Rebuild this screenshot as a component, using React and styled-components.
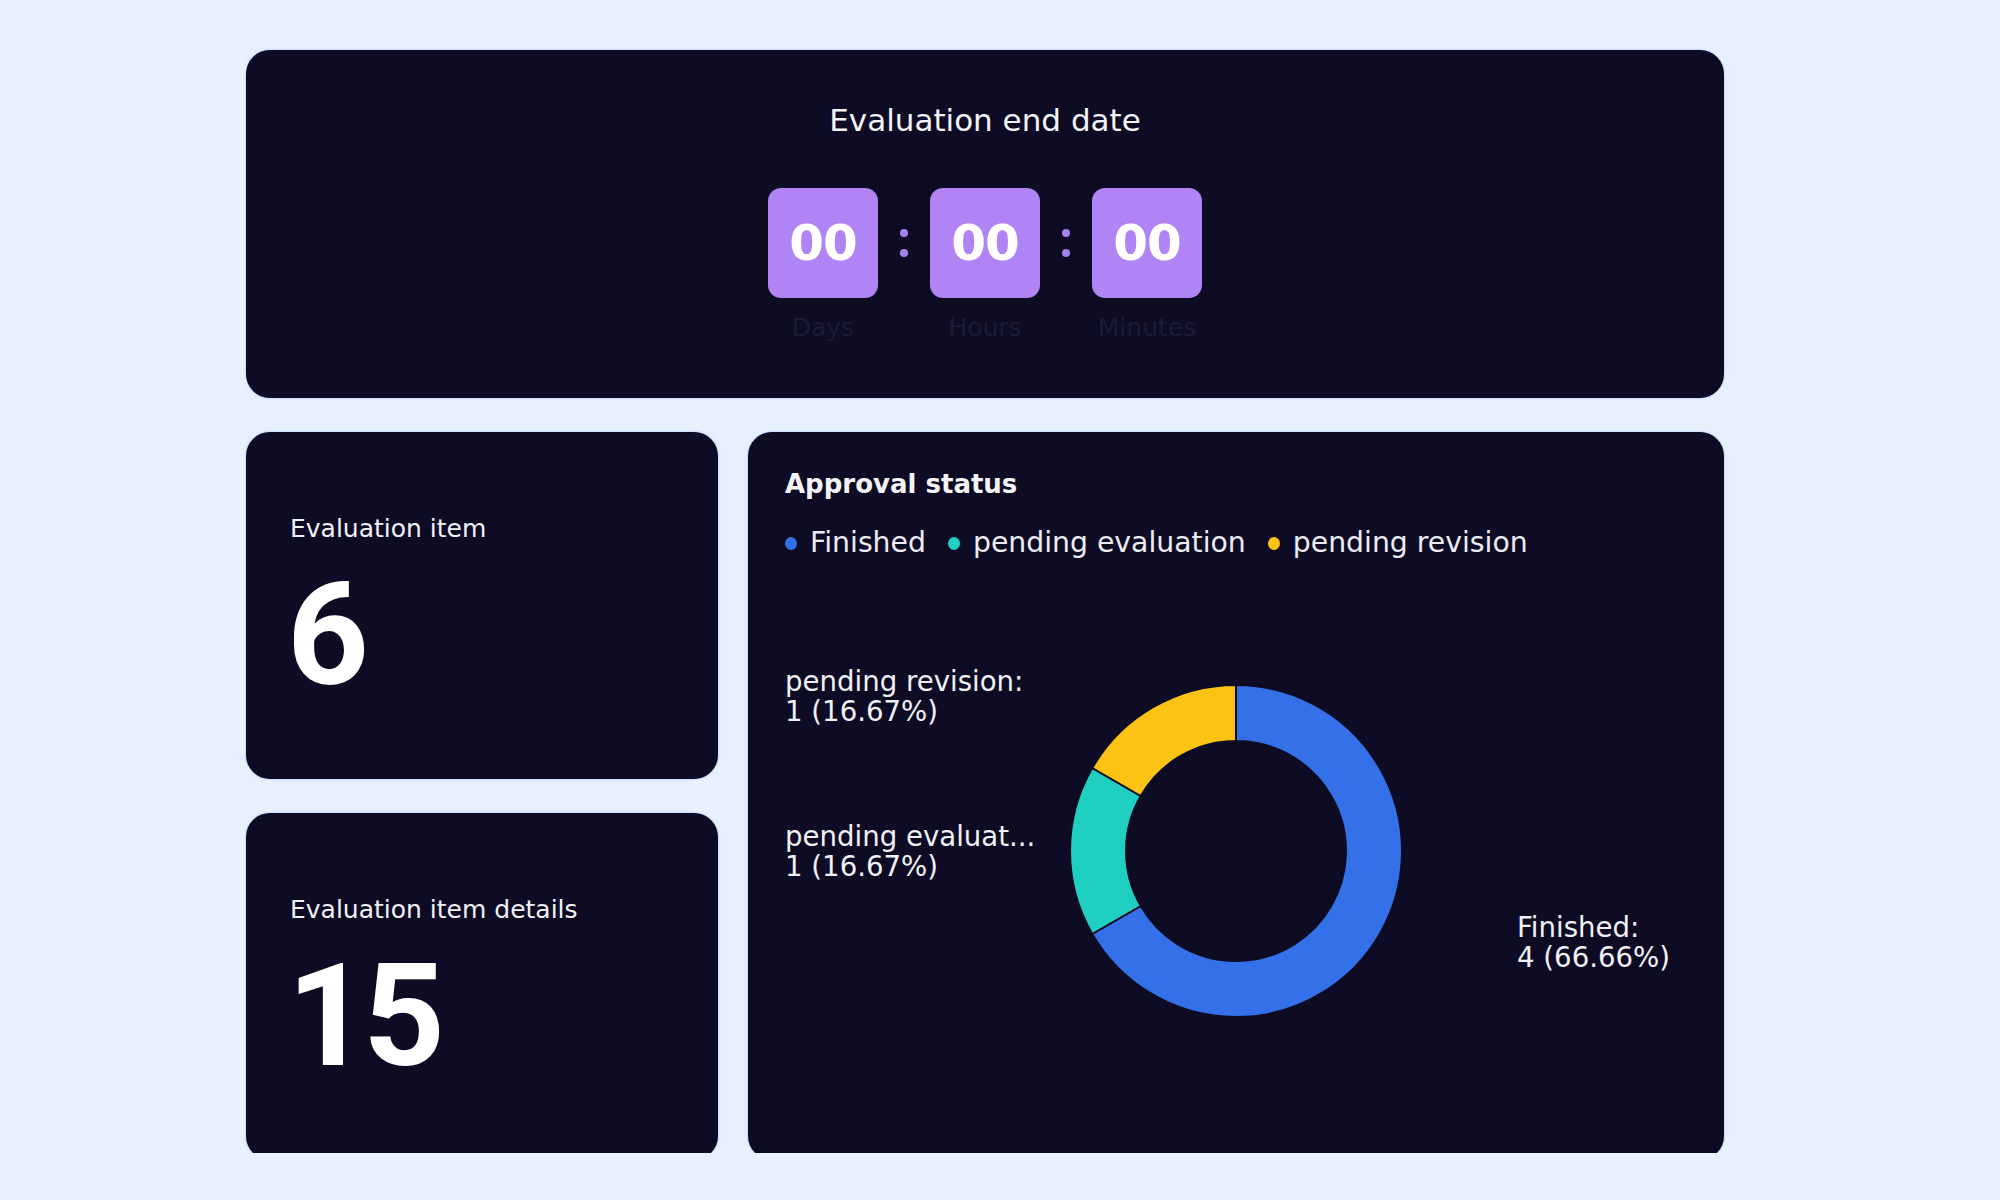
import React from "react";
import styled, { createGlobalStyle } from "styled-components";

const GlobalStyle = createGlobalStyle`
  html, body {
    margin: 0;
    padding: 0;
    background: #e8f0fe;
  }
  * { box-sizing: border-box; }
`;

const Page = styled.div`
  height: 1153px;
  overflow: hidden;
  padding: 50px 0 0 246px;
  font-family: "DejaVu Sans", "Liberation Sans", sans-serif;
  color: #f1f1f6;
`;

const Grid = styled.div`
  width: 1478px;
  display: grid;
  grid-template-columns: 472px 1fr;
  grid-template-rows: 348px 347px 347px;
  column-gap: 30px;
  row-gap: 34px;
`;

const Card = styled.section`
  background: #0d0c24;
  border-radius: 24px;
  box-shadow: 0 0 2px 0 rgba(60, 120, 255, 0.55);
  grid-column: ${(p) => p.$col || "auto"};
  grid-row: ${(p) => p.$row || "auto"};
`;

const CountdownCard = styled(Card)`
  display: flex;
  flex-direction: column;
  align-items: center;
  padding-top: 52px;
`;

const CountdownTitle = styled.h2`
  margin: 0;
  font-size: 31px;
  line-height: 36px;
  font-weight: 400;
  color: #f3f3f8;
`;

const Timer = styled.div`
  display: flex;
  margin-top: 50px;
  align-items: flex-start;
`;

const Unit = styled.div`
  display: flex;
  flex-direction: column;
  align-items: center;
  width: 110px;
`;

const DigitBox = styled.div`
  width: 110px;
  height: 110px;
  border-radius: 13px;
  background: #b084f4;
  display: flex;
  align-items: center;
  justify-content: center;
  font-family: "DejaVu Sans", sans-serif;
  font-weight: 700;
  font-size: 50px;
  color: #ffffff;
  letter-spacing: -1px;
`;

const UnitLabel = styled.div`
  margin-top: 15px;
  font-size: 25px;
  line-height: 30px;
  color: #1c1a36;
  white-space: nowrap;
`;

const Colon = styled.div`
  width: 52px;
  height: 110px;
  display: flex;
  flex-direction: column;
  align-items: center;
  justify-content: center;
  gap: 12px;
`;

const ColonDot = styled.span`
  width: 8px;
  height: 8px;
  border-radius: 50%;
  background: #a584ee;
`;

const StatCard = styled(Card)`
  padding: 82px 0 0 44px;
`;

const StatLabel = styled.div`
  font-size: 25px;
  line-height: 30px;
  color: #f1f1f6;
`;

const StatValue = styled.div`
  margin-top: 20px;
  margin-left: -3px;
  font-family: Roboto, "Liberation Sans", sans-serif;
  font-weight: 700;
  font-size: 143px;
  line-height: 143px;
  letter-spacing: -6px;
  color: #ffffff;
`;

const ChartCard = styled(Card)`
  padding: 37px 37px 0 37px;
`;

const ChartTitle = styled.h3`
  margin: 0;
  font-size: 26px;
  line-height: 30px;
  font-weight: 700;
  color: #f4f4f8;
`;

const Legend = styled.ul`
  list-style: none;
  margin: 28px 0 0;
  padding: 0;
  display: flex;
  gap: 22px;
`;

const LegendItem = styled.li`
  display: flex;
  align-items: center;
  gap: 13px;
  font-size: 28.3px;
  line-height: 32px;
  color: #ececf2;
`;

const LegendDot = styled.span`
  width: 12px;
  height: 13px;
  border-radius: 50%;
  background: ${(p) => p.$color};
`;

const ChartArea = styled.div`
  position: relative;
  height: 582px;
  padding-top: 2px;
  display: flex;
  align-items: center;
  justify-content: center;
`;

const DonutSvg = styled.svg`
  display: block;
  width: 340px;
  height: 340px;
`;

const SliceLabel = styled.div`
  position: absolute;
  left: ${(p) => p.$x}px;
  top: ${(p) => p.$y}px;
  font-size: 27.6px;
  line-height: 30px;
  color: #f0f0f5;
  white-space: nowrap;
`;

const COLORS = {
  finished: "#3471e8",
  evaluation: "#1fcfbf",
  revision: "#fcc315",
};

const slices = [
  { key: "finished", from: 0, to: 240 },
  { key: "evaluation", from: 240, to: 300 },
  { key: "revision", from: 300, to: 360 },
];

function arcPath(cx, cy, r0, r1, a0, a1) {
  const pt = (r, a) => {
    const rad = (a * Math.PI) / 180;
    return [cx + r * Math.sin(rad), cy - r * Math.cos(rad)];
  };
  const large = a1 - a0 > 180 ? 1 : 0;
  const [x1, y1] = pt(r1, a0);
  const [x2, y2] = pt(r1, a1 - 0.0001);
  const [x3, y3] = pt(r0, a1 - 0.0001);
  const [x4, y4] = pt(r0, a0);
  return `M${x1} ${y1} A${r1} ${r1} 0 ${large} 1 ${x2} ${y2} L${x3} ${y3} A${r0} ${r0} 0 ${large} 0 ${x4} ${y4} Z`;
}

function Donut() {
  return (
    <DonutSvg viewBox="0 0 340 340">
      {slices.map((s) => (
        <path
          key={s.key}
          d={arcPath(170, 170, 110, 166, s.from, s.to)}
          fill={COLORS[s.key]}
          stroke="#0d0c24"
          strokeWidth="2"
          strokeLinejoin="round"
        />
      ))}
    </DonutSvg>
  );
}

export default function App() {
  return (
    <>
      <GlobalStyle />
      <Page>
        <Grid>
          <CountdownCard $col="1 / 3" $row="1">
            <CountdownTitle>Evaluation end date</CountdownTitle>
            <Timer>
              <Unit>
                <DigitBox>00</DigitBox>
                <UnitLabel>Days</UnitLabel>
              </Unit>
              <Colon>
                <ColonDot />
                <ColonDot />
              </Colon>
              <Unit>
                <DigitBox>00</DigitBox>
                <UnitLabel>Hours</UnitLabel>
              </Unit>
              <Colon>
                <ColonDot />
                <ColonDot />
              </Colon>
              <Unit>
                <DigitBox>00</DigitBox>
                <UnitLabel>Minutes</UnitLabel>
              </Unit>
            </Timer>
          </CountdownCard>

          <StatCard $col="1" $row="2">
            <StatLabel>Evaluation item</StatLabel>
            <StatValue>6</StatValue>
          </StatCard>

          <StatCard $col="1" $row="3">
            <StatLabel>Evaluation item details</StatLabel>
            <StatValue>15</StatValue>
          </StatCard>

          <ChartCard $col="2" $row="2 / 4">
            <ChartTitle>Approval status</ChartTitle>
            <Legend>
              <LegendItem>
                <LegendDot $color={COLORS.finished} />
                Finished
              </LegendItem>
              <LegendItem>
                <LegendDot $color={COLORS.evaluation} />
                pending evaluation
              </LegendItem>
              <LegendItem>
                <LegendDot $color={COLORS.revision} />
                pending revision
              </LegendItem>
            </Legend>
            <ChartArea>
              <Donut />
              <SliceLabel $x={0} $y={108}>
                pending revision:
                <br />1 (16.67%)
              </SliceLabel>
              <SliceLabel $x={0} $y={263}>
                pending evaluat...
                <br />1 (16.67%)
              </SliceLabel>
              <SliceLabel $x={732} $y={354}>
                Finished:
                <br />4 (66.66%)
              </SliceLabel>
            </ChartArea>
          </ChartCard>
        </Grid>
      </Page>
    </>
  );
}
